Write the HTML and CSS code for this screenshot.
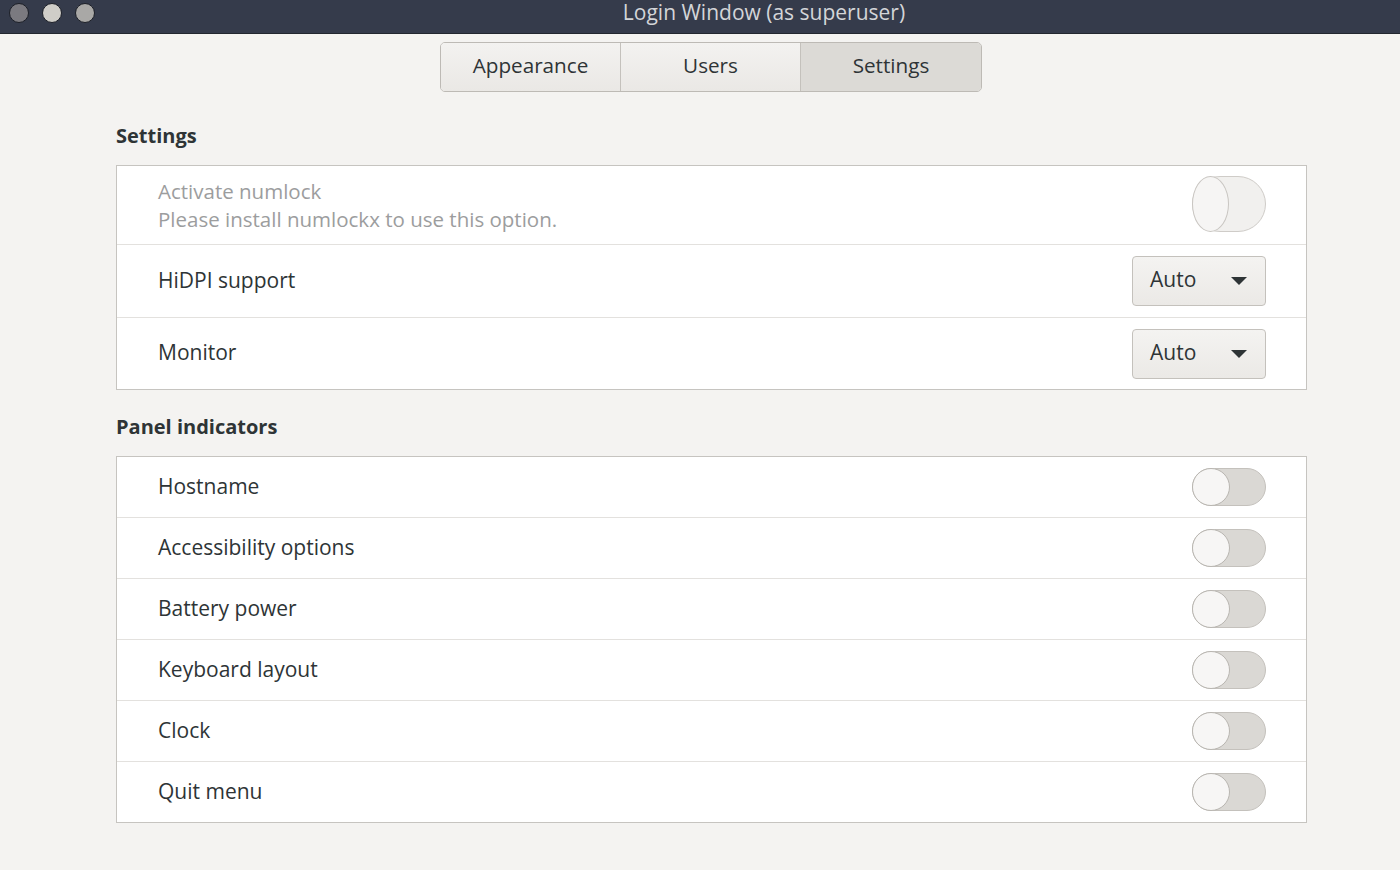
FILE: index.html
```html
<!DOCTYPE html>
<html>
<head>
<meta charset="utf-8">
<link rel="stylesheet" href="styles.css">
</head>
<body>
<div class="window">
  <header class="titlebar">
    <div class="lights">
      <span class="light l1"></span>
      <span class="light l2"></span>
      <span class="light l3"></span>
    </div>
    <div class="title">Login Window (as superuser)</div>
  </header>
  <nav class="tabs-wrap">
    <div class="tabs">
      <div class="tab">Appearance</div>
      <div class="tab">Users</div>
      <div class="tab active">Settings</div>
    </div>
  </nav>
  <main class="content">
    <h2 class="section-title">Settings</h2>
    <div class="listbox">
      <div class="row row-tall">
        <div class="label dim">
          <div>Activate numlock</div>
          <div>Please install numlockx to use this option.</div>
        </div>
        <div class="switch insensitive"><span class="knob"></span></div>
      </div>
      <div class="row row-combo">
        <div class="label">HiDPI support</div>
        <div class="combo"><span>Auto</span><span class="arrow"></span></div>
      </div>
      <div class="row row-combo">
        <div class="label">Monitor</div>
        <div class="combo"><span>Auto</span><span class="arrow"></span></div>
      </div>
    </div>

    <h2 class="section-title second">Panel indicators</h2>
    <div class="listbox">
      <div class="row"><div class="label">Hostname</div><div class="switch"><span class="knob"></span></div></div>
      <div class="row"><div class="label">Accessibility options</div><div class="switch"><span class="knob"></span></div></div>
      <div class="row"><div class="label">Battery power</div><div class="switch"><span class="knob"></span></div></div>
      <div class="row"><div class="label">Keyboard layout</div><div class="switch"><span class="knob"></span></div></div>
      <div class="row"><div class="label">Clock</div><div class="switch"><span class="knob"></span></div></div>
      <div class="row"><div class="label">Quit menu</div><div class="switch"><span class="knob"></span></div></div>
    </div>
  </main>
</div>
</body>
</html>
```
FILE: styles.css
```css
* { box-sizing: border-box; }
html, body { margin: 0; padding: 0; }
body {
  width: 1400px;
  height: 870px;
  overflow: hidden;
  background: #f4f3f1;
  font-family: "Open Sans", "Noto Sans", sans-serif;
  color: #2e3436;
}
.window { display: flex; flex-direction: column; height: 870px; }
.titlebar {
  height: 34px;
  background: #353b4b;
  border-bottom: 1px solid #23272f;
  display: flex;
  align-items: center;
  justify-content: center;
  position: relative;
}
.lights {
  position: absolute;
  left: 9px;
  top: 3px;
  display: flex;
  gap: 13px;
}
.light {
  width: 20px; height: 20px; border-radius: 50%;
  border: 1px solid #1c1f27;
}
.l1 { background: #7b7a80; }
.l2 { background: #cfcdc8; }
.l3 { background: #a9a8a6; }
.title {
  color: #d3d5d8;
  font-size: 21px;
  margin-left: 128px;
  margin-top: -10px;
}
.tabs-wrap { display: flex; justify-content: center; padding-top: 8px; padding-left: 22px; }
.tabs {
  display: flex;
  border: 1px solid #bdbab5;
  border-radius: 5px;
  overflow: hidden;
  height: 50px;
}
.tab {
  width: 180px;
  display: flex; align-items: center; justify-content: center;
  background: linear-gradient(#f3f2f0, #eae8e5);
  font-size: 20.7px;
  color: #2e3436;
  border-right: 1px solid #c4c1bc;
  padding-bottom: 4px;
}
.tab:last-child { border-right: none; }
.tab.active { background: #dcdad6; }
.content { padding: 0 93px 0 116px; }
.section-title {
  margin: 0;
  font-size: 20px;
  font-weight: 700;
  height: 73px;
  padding-top: 31px;
  line-height: 26px;
}
.section-title.second { height: 66px; padding-top: 24px; }
.listbox {
  background: #fff;
  border: 1px solid #c6c4c0;
}
.row {
  height: 61px;
  display: flex;
  align-items: center;
  justify-content: space-between;
  padding: 0 40px 0 41px;
  border-top: 1px solid #e3e1de;
  font-size: 21px;
}
.row:first-child { border-top: none; height: 60px; }
.label { margin-top: -3px; }
.row-tall { height: 78px !important; }
.row-combo { height: 73px; }
.row-combo:last-child { height: 72px; }
.label.dim { color: #9c9d9e; line-height: 28px; margin-top: 0; font-size: 20.5px; }
.switch {
  width: 74px; height: 38px;
  border-radius: 19px;
  background: #dad8d4;
  border: 1px solid #c4c1bc;
  position: relative;
}
.knob {
  position: absolute;
  left: -1px; top: -1px;
  width: 38px; height: 38px;
  border-radius: 50%;
  background: #f7f6f5;
  border: 1px solid #b9b6b1;
}
.switch.insensitive {
  height: 56px;
  border-radius: 28px / 28px;
  background: #f1f0ee;
  border-color: #cfccc8;
  margin-top: -2px;
}
.switch.insensitive .knob {
  width: 37px; height: 56px;
  border-radius: 50%;
  background: #f6f5f4;
  border-color: #c9c6c2;
}
.combo {
  width: 134px; height: 50px;
  border: 1px solid #c4c1bc;
  border-radius: 4px;
  background: linear-gradient(#f4f3f1, #ebe9e6);
  display: flex; align-items: center; justify-content: space-between;
  padding: 0 18px 4px 17px;
  font-size: 21px;
}
.arrow {
  width: 0; height: 0;
  border-left: 8px solid transparent;
  border-right: 8px solid transparent;
  border-top: 8px solid #2e3436;
  margin-top: 4px;
}
```
